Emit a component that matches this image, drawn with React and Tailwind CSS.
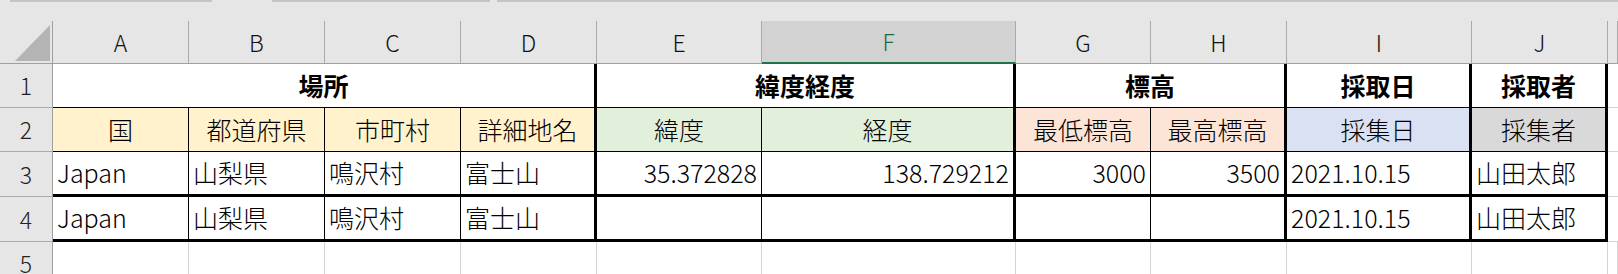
import React from 'react';
import clsx from 'clsx';

const COLS = ['A', 'B', 'C', 'D', 'E', 'F', 'G', 'H', 'I', 'J', 'K'];

// right borders per column in the table body (rows 2-4)
const RIGHT = {
  A: 'border-r border-r-black',
  B: 'border-r border-r-black',
  C: 'border-r border-r-black',
  D: 'border-r-[3px] border-r-black',
  E: 'border-r border-r-black',
  F: 'border-r-[3px] border-r-black',
  G: 'border-r border-r-black',
  H: 'border-r-[3px] border-r-black',
  I: 'border-r-[3px] border-r-black',
  J: 'border-r-[3px] border-r-black',
};

const FILL = {
  A: 'bg-[#fff2cc]',
  B: 'bg-[#fff2cc]',
  C: 'bg-[#fff2cc]',
  D: 'bg-[#fff2cc]',
  E: 'bg-[#e2efda]',
  F: 'bg-[#e2efda]',
  G: 'bg-[#fce4d6]',
  H: 'bg-[#fce4d6]',
  I: 'bg-[#d9e1f2]',
  J: 'bg-[#d9d9d9]',
};

const SUBHEAD = ['国', '都道府県', '市町村', '詳細地名', '緯度', '経度', '最低標高', '最高標高', '採集日', '採集者'];

const DATA = [
  ['Japan', '山梨県', '鳴沢村', '富士山', '35.372828', '138.729212', '3000', '3500', '2021.10.15', '山田太郎'],
  ['Japan', '山梨県', '鳴沢村', '富士山', '', '', '', '', '2021.10.15', '山田太郎'],
];

const NUMERIC = { E: true, F: true, G: true, H: true };

function Cell({ className, children }) {
  return (
    <div className={clsx('flex items-center overflow-hidden whitespace-nowrap text-[25px] text-black', className)}>
      {children}
    </div>
  );
}

function RowHead({ n }) {
  return (
    <div className="flex items-center justify-center border-r border-b border-r-[#9f9f9f] border-b-[#ababab] bg-[#e6e6e6] text-[23px] font-light text-[#222]">
      {n}
    </div>
  );
}

export default function App() {
  return (
    <div className="h-[274px] w-[1618px] overflow-hidden bg-white font-['Noto_Sans_CJK_JP','Noto_Sans',sans-serif]">
      {/* formula bar edge */}
      <div className="flex h-[21px] bg-[#e6e6e6]">
        <div className="w-[10px]" />
        <div className="h-[2px] w-[202px] bg-[#c4c4c4]" />
        <div className="w-[60px]" />
        <div className="h-[2px] w-[218px] bg-[#c4c4c4]" />
        <div className="w-[7px]" />
        <div className="h-[2px] flex-1 bg-[#c4c4c4]" />
      </div>

      <div className="grid grid-cols-[53px_136px_136px_136px_136px_165px_254px_135px_136px_185px_136px_1fr] grid-rows-[43px_44px_44px_45px_45px_32px]">
        {/* column headers */}
        <div className="relative border-r border-b border-r-[#9f9f9f] border-b-[#9f9f9f] bg-[#e6e6e6]">
          <svg className="absolute left-[15px] top-[4px]" width="36" height="37" viewBox="0 0 36 37">
            <polygon points="0,36 35,36 35,0" fill="#b4b4b4" />
          </svg>
        </div>
        {COLS.map((c) => (
          <div
            key={c}
            className={clsx(
              'flex items-center justify-center border-r border-r-[#ababab] text-[23px] font-light',
              c === 'F'
                ? 'border-b-2 border-b-[#217346] bg-[#d2d2d2] text-[#1d6b3f]'
                : 'border-b border-b-[#9f9f9f] bg-[#e6e6e6] text-[#111]'
            )}
          >
            {c === 'K' ? '' : c}
          </div>
        ))}

        {/* row 1 */}
        <RowHead n="1" />
        <Cell className="col-span-4 justify-center border-b border-b-black border-r-[3px] border-r-black font-bold">場所</Cell>
        <Cell className="col-span-2 justify-center border-b border-b-black border-r-[3px] border-r-black font-bold">緯度経度</Cell>
        <Cell className="col-span-2 justify-center border-b border-b-black border-r-[3px] border-r-black font-bold">標高</Cell>
        <Cell className="justify-center border-b border-b-black border-r-[3px] border-r-black font-bold">採取日</Cell>
        <Cell className="justify-center border-b border-b-black border-r-[3px] border-r-black font-bold">採取者</Cell>
        <div className="border-b border-b-[#d4d4d4]" />

        {/* row 2 */}
        <RowHead n="2" />
        {SUBHEAD.map((t, i) => {
          const c = COLS[i];
          return (
            <Cell key={c} className={clsx('justify-center border-b border-b-black font-light', RIGHT[c], FILL[c])}>
              {t}
            </Cell>
          );
        })}
        <div className="border-b border-b-[#d4d4d4]" />

        {/* rows 3-4 */}
        {DATA.map((row, r) => (
          <React.Fragment key={r}>
            <RowHead n={String(r + 3)} />
            {row.map((v, i) => {
              const c = COLS[i];
              return (
                <Cell
                  key={c}
                  className={clsx(
                    'border-b-[3px] border-b-black font-light',
                    RIGHT[c],
                    NUMERIC[c] ? 'justify-end pr-1' : 'justify-start pl-1'
                  )}
                >
                  {v}
                </Cell>
              );
            })}
            <div className="border-b border-b-[#d4d4d4]" />
          </React.Fragment>
        ))}

        {/* row 5 */}
        <div className="flex items-start justify-center border-r border-r-[#9f9f9f] bg-[#e6e6e6] pt-[4px] text-[23px] font-light text-[#222]">
          5
        </div>
        {COLS.map((c) => (
          <div key={c} className="border-r border-r-[#d4d4d4]" />
        ))}
      </div>
    </div>
  );
}
